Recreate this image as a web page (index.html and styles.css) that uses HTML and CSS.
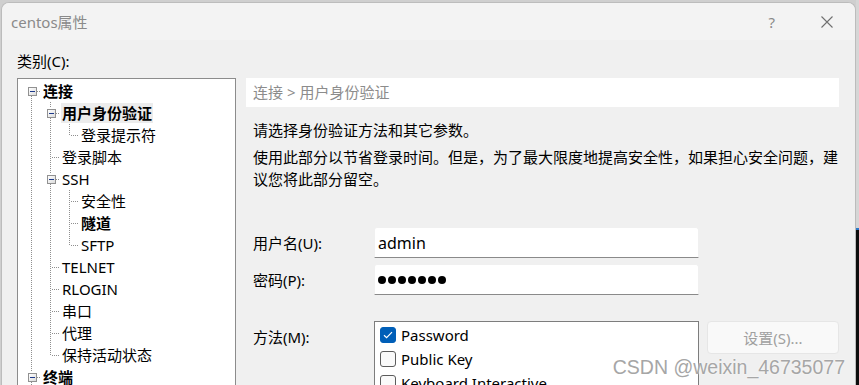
FILE: index.html
```html
<!DOCTYPE html>
<html lang="zh-CN">
<head>
    <meta charset="UTF-8">
    <title>centos属性</title>
    <link rel="stylesheet" href="styles.css">
</head>
<body>

    <div class="window">
        <!-- Titelleiste -->
        <div class="titlebar">
            <span class="title">centos属性</span>
            <span class="help">?</span>
            <span class="close">
                <svg width="12" height="12" viewBox="0 0 12 12"><path d="M0.5 0.5 L11.5 11.5 M11.5 0.5 L0.5 11.5" stroke="#707070" stroke-width="1.1" fill="none"/></svg>
            </span>
        </div>

        <div class="content">
            <div class="cat-label">类别(C):</div>

            <div class="main">
                <!-- Baum -->
                <div class="tree">
                    <div class="row"><span class="cell bx dn"><i class="box"></i></span><span class="txt bold">连接</span></div>
                    <div class="row"><span class="cell ln"></span><span class="cell bx up dn"><i class="box"></i></span><span class="txt bold sel">用户身份验证</span></div>
                    <div class="row"><span class="cell ln"></span><span class="cell ln"></span><span class="cell end"></span><span class="txt">登录提示符</span></div>
                    <div class="row"><span class="cell ln"></span><span class="cell tee"></span><span class="txt">登录脚本</span></div>
                    <div class="row"><span class="cell ln"></span><span class="cell bx up dn"><i class="box"></i></span><span class="txt">SSH</span></div>
                    <div class="row"><span class="cell ln"></span><span class="cell ln"></span><span class="cell tee"></span><span class="txt">安全性</span></div>
                    <div class="row"><span class="cell ln"></span><span class="cell ln"></span><span class="cell tee"></span><span class="txt bold">隧道</span></div>
                    <div class="row"><span class="cell ln"></span><span class="cell ln"></span><span class="cell end"></span><span class="txt">SFTP</span></div>
                    <div class="row"><span class="cell ln"></span><span class="cell tee"></span><span class="txt">TELNET</span></div>
                    <div class="row"><span class="cell ln"></span><span class="cell tee"></span><span class="txt">RLOGIN</span></div>
                    <div class="row"><span class="cell ln"></span><span class="cell tee"></span><span class="txt">串口</span></div>
                    <div class="row"><span class="cell ln"></span><span class="cell tee"></span><span class="txt">代理</span></div>
                    <div class="row"><span class="cell ln"></span><span class="cell end"></span><span class="txt">保持活动状态</span></div>
                    <div class="row"><span class="cell bx up dn"><i class="box"></i></span><span class="txt bold">终端</span></div>
                </div>

                <!-- Einstellungen -->
                <div class="panel">
                    <div class="crumb">连接 &gt; 用户身份验证</div>
                    <p class="intro">请选择身份验证方法和其它参数。</p>
                    <p class="desc">使用此部分以节省登录时间。但是，为了最大限度地提高安全性，如果担心安全问题，建议您将此部分留空。</p>

                    <div class="field first">
                        <label>用户名(U):</label>
                        <div class="textbox">admin</div>
                    </div>
                    <div class="field">
                        <label>密码(P):</label>
                        <div class="textbox"><span class="dot"></span><span class="dot"></span><span class="dot"></span><span class="dot"></span><span class="dot"></span><span class="dot"></span><span class="dot"></span></div>
                    </div>

                    <div class="method">
                        <label>方法(M):</label>
                        <div class="listbox">
                            <div class="item"><span class="check on"><svg width="10" height="8" viewBox="0 0 10 8"><path d="M1 4.2 L3.6 6.6 L9 1.2" stroke="#fff" stroke-width="1.2" fill="none"/></svg></span>Password</div>
                            <div class="item"><span class="check"></span>Public Key</div>
                            <div class="item"><span class="check"></span>Keyboard Interactive</div>
                        </div>
                        <button class="settings" disabled>设置(S)...</button>
                    </div>
                </div>
            </div>
        </div>

        <div class="watermark">CSDN @weixin_46735077</div>
    </div>

</body>
</html>
```

FILE: styles.css
```css
body {
    margin: 0;
    height: 385px;
    overflow: hidden;
    font-family: "Noto Sans", "Noto Sans CJK SC", sans-serif;
    background: linear-gradient(to bottom, #d6d6d6 228px, #2a78c8 228px 230px, #0d0d0d 230px) right top / 3px 100% no-repeat, #cfcfcf;
}

.window {
    position: relative;
    margin: 2px 0 0 1px;
    width: 855px;
    height: 383px;
    box-sizing: border-box;
    border: 1px solid #bcbcbc;
    border-bottom: none;
    border-radius: 8px 8px 0 0;
    background-color: #f0f0f0;
    overflow: hidden;
}

.titlebar {
    height: 37px;
    display: flex;
    align-items: center;
    padding-left: 9px;
    background-color: #f3f3f3;
}

.title {
    flex: 1;
    font-size: 15px;
    color: #8a8a8a;
}

.help {
    font-size: 15px;
    color: #8a8a8a;
    margin-right: 46px;
}

.close {
    display: flex;
    margin-right: 22px;
}

.content {
    padding: 11px 0 0 15px;
}

.cat-label {
    font-size: 15px;
    line-height: 20px;
    color: #000;
    margin-bottom: 7px;
}

.main {
    display: flex;
    gap: 10px;
}

/* Baum */
.tree {
    width: 219px;
    height: 320px;
    box-sizing: border-box;
    border: 1px solid #8c8c8c;
    background-color: #fff;
    padding: 1px 0 0 4px;
}

.row {
    display: flex;
    align-items: center;
    height: 22px;
}

.cell {
    flex: none;
    width: 19px;
    height: 22px;
    display: flex;
    align-items: center;
    justify-content: center;
    background-repeat: no-repeat;
}

.ln {
    background-image: repeating-linear-gradient(to bottom, #8f8f8f 0 1px, transparent 1px 2px);
    background-size: 1px 22px;
    background-position: 9px 0;
}

.tee {
    background-image:
        repeating-linear-gradient(to bottom, #8f8f8f 0 1px, transparent 1px 2px),
        repeating-linear-gradient(to right, #8f8f8f 0 1px, transparent 1px 2px);
    background-size: 1px 22px, 9px 1px;
    background-position: 9px 0, 11px 11px;
}

.end {
    background-image:
        repeating-linear-gradient(to bottom, #8f8f8f 0 1px, transparent 1px 2px),
        repeating-linear-gradient(to right, #8f8f8f 0 1px, transparent 1px 2px);
    background-size: 1px 11px, 9px 1px;
    background-position: 9px 0, 11px 11px;
}

.bx {
    background-image: repeating-linear-gradient(to right, #8f8f8f 0 1px, transparent 1px 2px);
    background-size: 4px 1px;
    background-position: 15px 11px;
}

.bx.up {
    background-image:
        repeating-linear-gradient(to right, #8f8f8f 0 1px, transparent 1px 2px),
        repeating-linear-gradient(to bottom, #8f8f8f 0 1px, transparent 1px 2px);
    background-size: 4px 1px, 1px 6px;
    background-position: 15px 11px, 9px 0;
}

.bx.dn {
    background-image:
        repeating-linear-gradient(to right, #8f8f8f 0 1px, transparent 1px 2px),
        repeating-linear-gradient(to bottom, #8f8f8f 0 1px, transparent 1px 2px);
    background-size: 4px 1px, 1px 6px;
    background-position: 15px 11px, 9px 16px;
}

.bx.up.dn {
    background-image:
        repeating-linear-gradient(to right, #8f8f8f 0 1px, transparent 1px 2px),
        repeating-linear-gradient(to bottom, #8f8f8f 0 1px, transparent 1px 2px),
        repeating-linear-gradient(to bottom, #8f8f8f 0 1px, transparent 1px 2px);
    background-size: 4px 1px, 1px 6px, 1px 6px;
    background-position: 15px 11px, 9px 0, 9px 16px;
}

.box {
    width: 9px;
    height: 9px;
    box-sizing: border-box;
    border: 1px solid #919191;
    background: linear-gradient(to bottom right, #ffffff, #dcdcdc);
    display: flex;
    align-items: center;
    justify-content: center;
    margin-left: 1px;
}

.box::after {
    content: "";
    width: 5px;
    height: 1px;
    background-color: #1e3a8a;
}

.txt {
    margin-left: 2px;
    font-size: 15px;
    line-height: 20px;
    color: #000;
    white-space: nowrap;
}

.bold {
    font-weight: bold;
}

.sel {
    margin-left: 1px;
    padding: 0 1px;
    background-color: #ececec;
}

/* Einstellungen */
.panel {
    width: 593px;
}

.crumb {
    height: 29px;
    line-height: 29px;
    padding-left: 7px;
    background-color: #fff;
    font-size: 15px;
    color: #8c8c8c;
}

.intro, .desc {
    margin: 0;
    padding-left: 7px;
    font-size: 15px;
    line-height: 22px;
    color: #000;
}

.intro {
    margin-top: 12px;
}

.desc {
    margin-top: 5px;
}

.field {
    display: flex;
    align-items: center;
    padding-left: 7px;
    margin-top: 6px;
}

.field.first {
    margin-top: 37px;
}

.field label, .method label {
    width: 121px;
    font-size: 15px;
    color: #000;
}

.textbox {
    width: 325px;
    height: 31px;
    box-sizing: border-box;
    display: flex;
    align-items: center;
    padding-left: 3px;
    background-color: #fff;
    border: 1px solid #f0f0f0;
    border-bottom: 1px solid #8a8a8a;
    border-radius: 3px 3px 0 0;
    font-size: 16px;
    color: #000;
}

.dot {
    width: 8px;
    height: 8px;
    border-radius: 50%;
    background-color: #000;
    margin-right: 2px;
}

.method {
    display: flex;
    align-items: flex-start;
    padding-left: 7px;
    margin-top: 26px;
}

.method label {
    margin-top: 5px;
}

.listbox {
    width: 325px;
    height: 80px;
    box-sizing: border-box;
    border: 1px solid #7d7d7d;
    background-color: #fff;
    padding: 1px 0 0 5px;
}

.item {
    display: flex;
    align-items: center;
    height: 24px;
    font-size: 15px;
    color: #000;
}

.check {
    width: 16px;
    height: 16px;
    box-sizing: border-box;
    border: 1px solid #5c5c5c;
    border-radius: 3px;
    margin-right: 5px;
    display: flex;
    align-items: center;
    justify-content: center;
    background-color: #fafafa;
}

.check.on {
    border-color: #005fb8;
    background-color: #005fb8;
}

.settings {
    margin-left: 8px;
    width: 132px;
    height: 33px;
    border: 1px solid #e6e6e6;
    border-radius: 4px;
    background-color: #f9f9f9;
    font-family: "Noto Sans", "Noto Sans CJK SC", sans-serif;
    font-size: 15px;
    color: #a0a0a0;
}

.watermark {
    position: absolute;
    right: 10px;
    bottom: 7px;
    font-family: "Liberation Sans", Arial, sans-serif;
    font-size: 19.5px;
    line-height: 22px;
    color: #a6a6a6;
    text-shadow: 0 0 2px #ffffff;
    white-space: nowrap;
}
```
